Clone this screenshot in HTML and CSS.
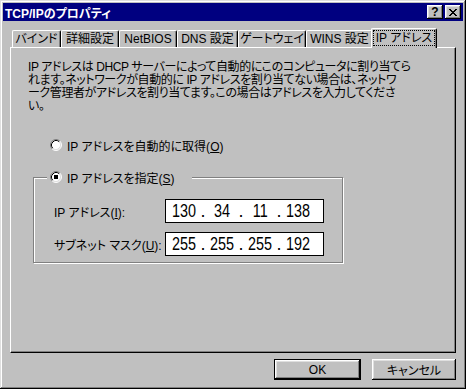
FILE: index.html
```html
<!DOCTYPE html>
<html lang="ja">
<head>
    <meta charset="UTF-8">
    <title>TCP/IPのプロパティ</title>
    <link rel="stylesheet" href="styles.css">
</head>
<body>
    <div class="window">
        <div class="titlebar">
            <span class="title">TCP/IPのプロパティ</span>
            <div class="caption-buttons">
                <span class="cap-btn">?</span>
                <span class="cap-btn">
                    <svg width="8" height="7" viewBox="0 0 8 7" shape-rendering="crispEdges">
                        <rect x="0" y="0" width="2" height="1"/><rect x="6" y="0" width="2" height="1"/>
                        <rect x="1" y="1" width="2" height="1"/><rect x="5" y="1" width="2" height="1"/>
                        <rect x="2" y="2" width="4" height="1"/>
                        <rect x="3" y="3" width="2" height="1"/>
                        <rect x="2" y="4" width="4" height="1"/>
                        <rect x="1" y="5" width="2" height="1"/><rect x="5" y="5" width="2" height="1"/>
                        <rect x="0" y="6" width="2" height="1"/><rect x="6" y="6" width="2" height="1"/>
                    </svg>
                </span>
            </div>
        </div>

        <div class="tabs">
            <div class="tab">バインド</div>
            <div class="tab">詳細設定</div>
            <div class="tab">NetBIOS</div>
            <div class="tab">DNS 設定</div>
            <div class="tab">ゲートウェイ</div>
            <div class="tab">WINS 設定</div>
            <div class="tab active"><span class="focus">IP アドレス</span></div>
        </div>

        <div class="panel">
            <p class="desc">IP アドレスは DHCP サーバーによって自動的にこのコンピュータに割り当てら<br>れます。ネットワークが自動的に IP アドレスを割り当てない場合は、ネットワ<br>ーク管理者がアドレスを割り当てます。この場合はアドレスを入力してくださ<br>い。</p>

            <div class="radio-row">
                <svg class="radio" width="12" height="12" viewBox="0 0 12 12">
                    <circle cx="6" cy="6" r="5" fill="#fff"/>
                    <path d="M2.11 9.89 A5.5 5.5 0 0 1 9.89 2.11" fill="none" stroke="#808080"/>
                    <path d="M9.89 2.11 A5.5 5.5 0 0 1 2.11 9.89" fill="none" stroke="#fff"/>
                    <path d="M2.82 9.18 A4.5 4.5 0 0 1 9.18 2.82" fill="none" stroke="#000"/>
                    <path d="M9.18 2.82 A4.5 4.5 0 0 1 2.82 9.18" fill="none" stroke="#dfdfdf"/>
                </svg>
                <span>IP アドレスを自動的に取得(<u>O</u>)</span>
            </div>

            <div class="group">
                <div class="legend">
                    <svg class="radio" width="12" height="12" viewBox="0 0 12 12">
                        <circle cx="6" cy="6" r="5" fill="#fff"/>
                        <path d="M2.11 9.89 A5.5 5.5 0 0 1 9.89 2.11" fill="none" stroke="#808080"/>
                        <path d="M9.89 2.11 A5.5 5.5 0 0 1 2.11 9.89" fill="none" stroke="#fff"/>
                        <path d="M2.82 9.18 A4.5 4.5 0 0 1 9.18 2.82" fill="none" stroke="#000"/>
                        <path d="M9.18 2.82 A4.5 4.5 0 0 1 2.82 9.18" fill="none" stroke="#dfdfdf"/>
                        <rect x="4" y="4" width="4" height="4" fill="#000"/>
                    </svg>
                    <span>IP アドレスを指定(<u>S</u>)</span>
                </div>

                <div class="field-rows">
                    <div class="field-row">
                        <span class="field-label">IP アドレス(<u>I</u>):</span>
                        <div class="ipbox">
                            <span class="octet"><span>130</span></span><span class="dot">.</span>
                            <span class="octet"><span>34</span></span><span class="dot">.</span>
                            <span class="octet"><span>11</span></span><span class="dot">.</span>
                            <span class="octet"><span>138</span></span>
                        </div>
                    </div>
                    <div class="field-row">
                        <span class="field-label">サブネット マスク(<u>U</u>):</span>
                        <div class="ipbox">
                            <span class="octet"><span>255</span></span><span class="dot">.</span>
                            <span class="octet"><span>255</span></span><span class="dot">.</span>
                            <span class="octet"><span>255</span></span><span class="dot">.</span>
                            <span class="octet"><span>192</span></span>
                        </div>
                    </div>
                </div>
            </div>
        </div>

        <div class="buttons">
            <button class="btn btn-default">OK</button>
            <button class="btn btn-cancel">キャンセル</button>
        </div>
    </div>
</body>
</html>
```

FILE: styles.css
```css
* {
    box-sizing: border-box;
}
body {
    margin: 0;
    background: #c0c0c0;
    color: #000;
    font-family: "Liberation Sans", "Noto Sans CJK JP", sans-serif;
    font-size: 12px;
    font-feature-settings: "palt"; /* かなを詰める */
}
.window {
    width: 466px;
    height: 389px;
    padding: 3px;
    background: #c0c0c0;
    box-shadow: inset -1px -1px #000, inset 1px 1px #dfdfdf, inset -2px -2px #808080, inset 2px 2px #fff;
    display: flex;
    flex-direction: column;
}
.titlebar {
    height: 18px;
    padding: 0 2px;
    background: #000080;
    color: #fff;
    display: flex;
    align-items: center;
    justify-content: space-between;
}
.title {
    font-weight: bold;
}
.caption-buttons {
    display: flex;
    gap: 2px;
}
.cap-btn {
    width: 16px;
    height: 14px;
    background: #c0c0c0;
    color: #000;
    font-weight: bold;
    font-size: 12px;
    line-height: 14px;
    display: flex;
    align-items: center;
    justify-content: center;
    box-shadow: inset -1px -1px #000, inset 1px 1px #fff, inset -2px -2px #808080, inset 2px 2px #dfdfdf;
}

/* タブ */
.tabs {
    display: flex;
    align-items: flex-end;
    height: 19px;
    margin: 7px 7px 0;
    padding-left: 2px;
}
.tab {
    height: 17px;
    line-height: 16px;
    text-align: center;
    white-space: nowrap;
    background: #c0c0c0;
    border-top: 1px solid #fff;
    border-left: 1px solid #fff;
    border-right: 1px solid #000;
    border-radius: 2px 2px 0 0;
    box-shadow: inset -1px 0 #808080;
}
.tab:nth-child(1) { width: 49px; }
.tab:nth-child(2) { width: 58px; }
.tab:nth-child(3) { width: 58px; }
.tab:nth-child(4) { width: 61px; }
.tab:nth-child(5) { width: 68px; }
.tab:nth-child(6) { width: 67px; }
.tab.active {
    width: 66px;
    height: 20px;
    margin: 0 -2px -1px;
    padding-top: 1px;
    position: relative;
    z-index: 1;
}
.focus {
    display: inline-block;
    padding: 0 2px;
    line-height: 14px;
    outline: 1px dotted #000;
}

/* パネル */
.panel {
    height: 306px;
    margin: 0 7px;
    padding: 13px 17px 0;
    border-top: 1px solid #fff;
    border-left: 1px solid #fff;
    border-right: 1px solid #000;
    border-bottom: 1px solid #000;
    box-shadow: inset -1px -1px #808080;
    display: flex;
    flex-direction: column;
    align-items: flex-start;
}
.desc {
    margin: 0;
    line-height: 13px;
    letter-spacing: -0.4px;
    white-space: nowrap;
}
.radio-row {
    display: flex;
    align-items: center;
    gap: 5px;
    height: 14px;
    margin: 25px 0 0 22px;
}
.radio {
    flex: none;
}
.group {
    width: 310px;
    margin: 25px 0 0 5px;
    padding: 0 0 6px 20px;
    border: 1px solid #808080;
    box-shadow: inset 1px 1px #fff, 1px 1px #fff;
}
.legend {
    display: flex;
    align-items: center;
    gap: 5px;
    width: 145px;
    height: 14px;
    margin: -8px 0 0 -7px;
    padding-left: 3px;
    background: #c0c0c0;
}
.field-rows {
    display: flex;
    flex-direction: column;
    gap: 9px;
    margin-top: 15px;
}
.field-row {
    display: flex;
    align-items: center;
}
.field-label {
    width: 111px;
    white-space: nowrap;
}
.ipbox {
    width: 159px;
    height: 24px;
    padding-left: 3px;
    background: #fff;
    border: 1px solid #000;
    display: flex;
    align-items: center;
    font-size: 18px;
}
.octet {
    width: 30px;
    text-align: center;
}
.octet span {
    display: inline-block;
    transform: scaleX(0.8);
}
.dot {
    width: 8px;
    text-align: center;
}

/* ボタン */
.buttons {
    display: flex;
    justify-content: flex-end;
    gap: 11px;
    margin: 6px 7px 0;
}
.btn {
    height: 21px;
    padding: 0;
    border: none;
    background: #c0c0c0;
    color: #000;
    font: inherit;
    box-shadow: inset -1px -1px #000, inset 1px 1px #fff, inset -2px -2px #808080, inset 2px 2px #dfdfdf;
}
.btn-default {
    width: 87px;
    border: 1px solid #000;
}
.btn-cancel {
    width: 84px;
}
```
